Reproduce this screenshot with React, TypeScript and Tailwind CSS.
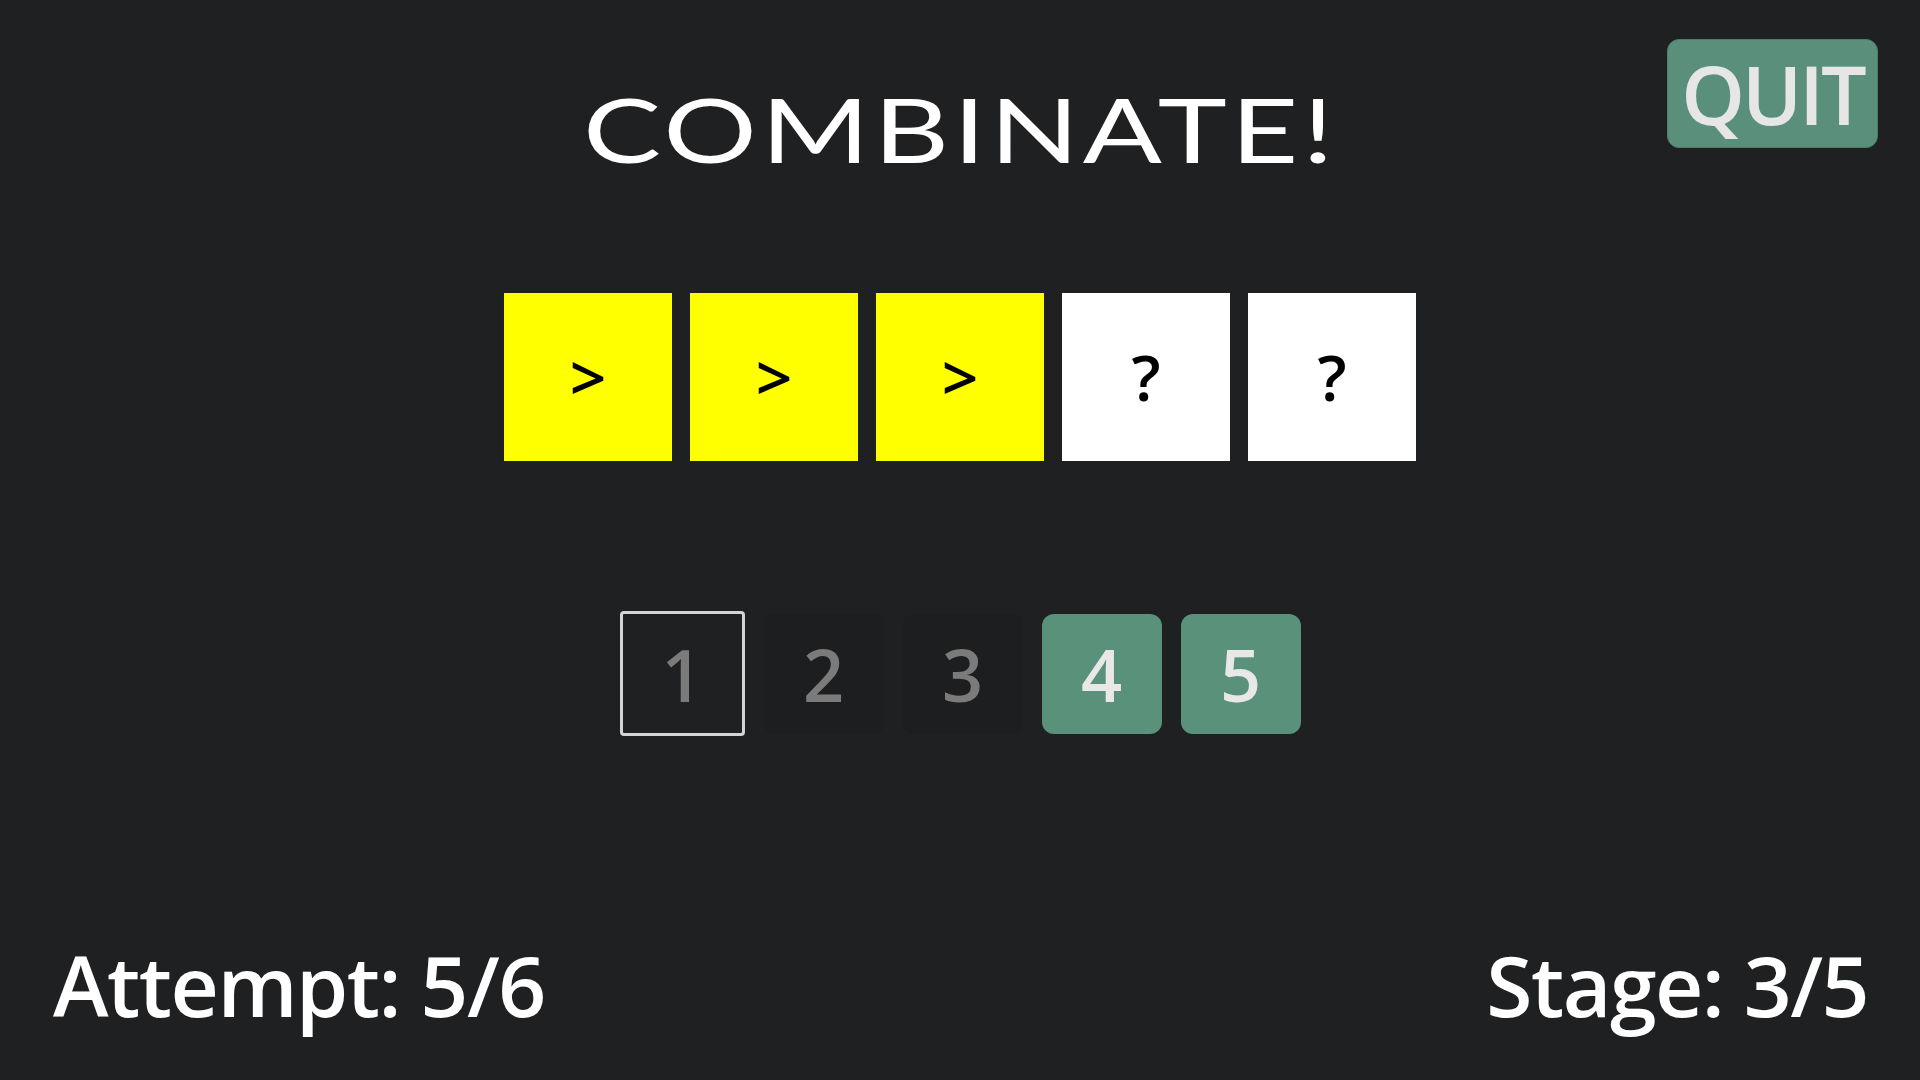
const cards = [
  { label: ">", revealed: true },
  { label: ">", revealed: true },
  { label: ">", revealed: true },
  { label: "?", revealed: false },
  { label: "?", revealed: false },
];

const choices = [
  { n: 1, state: "selected" },
  { n: 2, state: "used" },
  { n: 3, state: "used" },
  { n: 4, state: "open" },
  { n: 5, state: "open" },
];

export default function App() {
  return (
    <div className="h-screen w-full bg-[#1f2022] flex flex-col overflow-hidden">
      {/* header */}
      <div className="grid grid-cols-[1fr_auto_1fr] items-start">
        <div />
        <h1 className="mt-[83px] text-[90px] leading-none font-normal text-white tracking-[3px] scale-x-[1.3] font-['Lato','Liberation_Sans',sans-serif]">
          COMBINATE!
        </h1>
        <div className="flex justify-end">
          <button className="mt-[39px] mr-[42px] w-[211px] h-[109px] rounded-[12px] bg-[#5a8f7b] border border-[#4d7d6a] flex items-center justify-center text-[81px] leading-none font-semibold tracking-[-3px] text-[#e6e6e6] font-['Open_Sans','Liberation_Sans',sans-serif]">
            QUIT
          </button>
        </div>
      </div>

      {/* combination cards */}
      <div className="mt-[120px] flex justify-center gap-[18px]">
        {cards.map((c, i) => (
          <div
            key={i}
            className={`w-[168px] h-[168px] flex items-center justify-center text-[64px] leading-none font-semibold text-black font-['Open_Sans','DejaVu_Sans',sans-serif] ${
              c.revealed ? "bg-[#ffff00]" : "bg-white"
            }`}
          >
            {c.label}
          </div>
        ))}
      </div>

      {/* number choices */}
      <div className="mt-[150px] flex justify-center items-center gap-[19px] font-['Open_Sans','Liberation_Sans',sans-serif] font-semibold">
        {choices.map((c) =>
          c.state === "selected" ? (
            <div
              key={c.n}
              className="w-[125px] h-[125px] rounded-[4px] border-[3px] border-[#d4d4d4] flex items-center justify-center text-[72px] leading-none text-[#7b7b7b]"
            >
              {c.n}
            </div>
          ) : c.state === "used" ? (
            <div
              key={c.n}
              className="w-[120px] h-[120px] rounded-[10px] bg-[#1d1e20] flex items-center justify-center text-[72px] leading-none text-[#7b7b7b]"
            >
              {c.n}
            </div>
          ) : (
            <div
              key={c.n}
              className="w-[120px] h-[120px] rounded-[12px] bg-[#5a917b] flex items-center justify-center text-[72px] leading-none text-[#e8e8e8]"
            >
              {c.n}
            </div>
          )
        )}
      </div>

      {/* status */}
      <div className="mt-auto pl-[53px] pr-[52px] pb-[53px] flex justify-between text-[84px] leading-none font-semibold tracking-[-1.5px] text-white font-['Open_Sans','Liberation_Sans',sans-serif]">
        <span>Attempt: 5/6</span>
        <span>Stage: 3/5</span>
      </div>
    </div>
  );
}
